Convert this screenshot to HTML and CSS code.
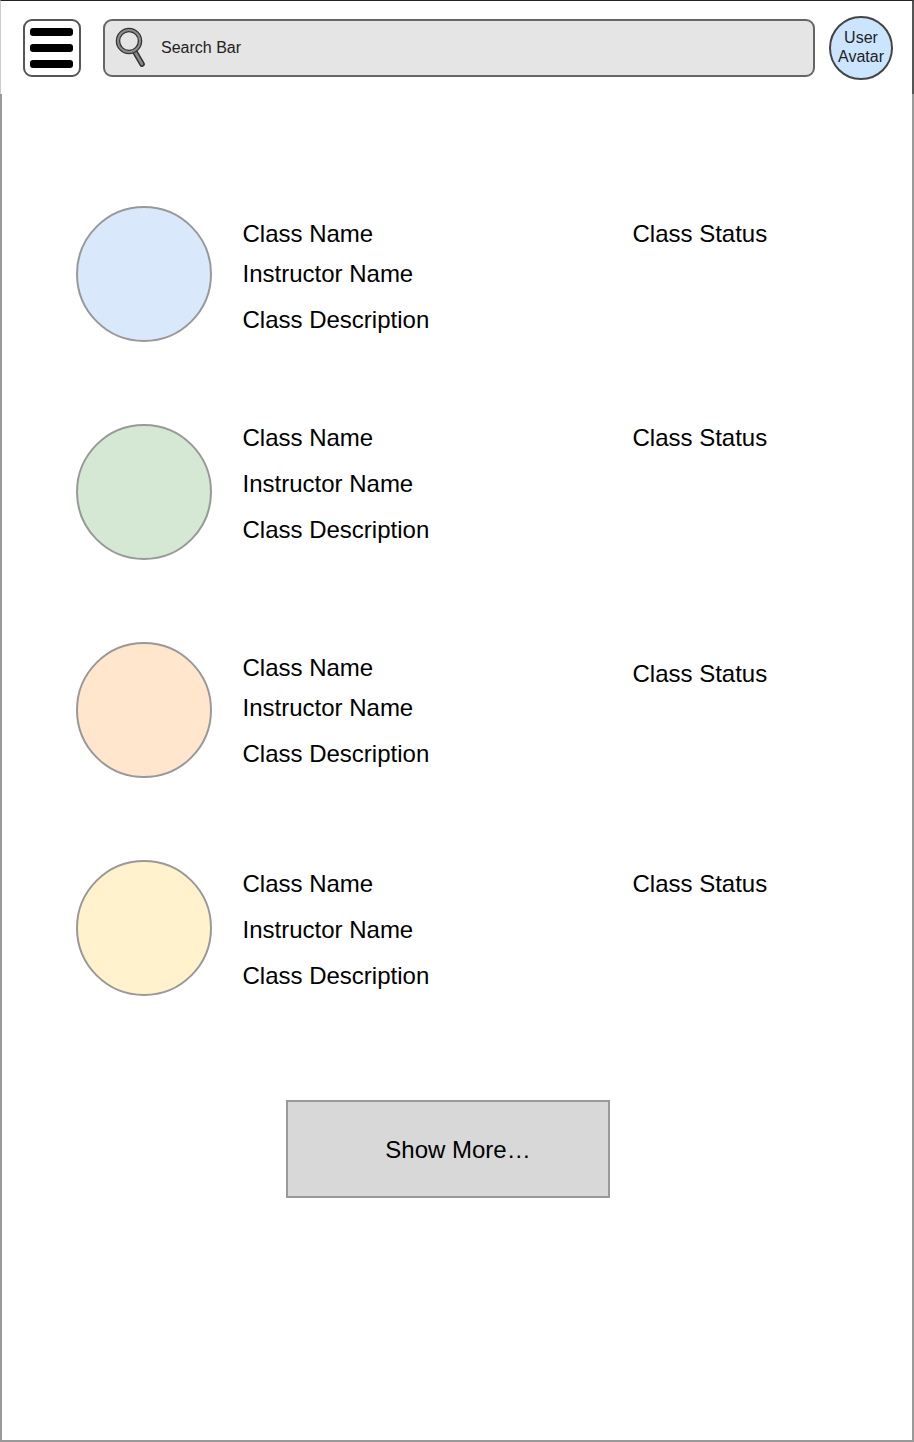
FILE: index.html
```html
<!DOCTYPE html>
<html lang="en">
<head>
  <meta charset="UTF-8">
  <meta name="viewport" content="width=device-width, initial-scale=1.0">
  <title>Classes</title>
  <link rel="stylesheet" href="styles.css">
</head>
<body>

  <!-- Top bar -->
  <header class="top-bar">
    <button class="menu-button" aria-label="Menu">
      <span class="menu-line"></span>
      <span class="menu-line"></span>
      <span class="menu-line"></span>
    </button>
    <div class="search-bar">
      <svg class="search-icon" width="30" height="40" viewBox="0 0 30 40" aria-hidden="true">
        <path d="M20 25 L27 37" stroke="#333" stroke-width="5.5" stroke-linecap="round"/>
        <path d="M20 25 L27 37" stroke="#888" stroke-width="2.5" stroke-linecap="round"/>
        <circle cx="14" cy="14" r="11" fill="none" stroke="#333" stroke-width="4.5"/>
        <circle cx="14" cy="14" r="11" fill="none" stroke="#8c8c8c" stroke-width="2"/>
      </svg>
      <span class="search-label">Search Bar</span>
    </div>
    <div class="avatar">User<br>Avatar</div>
  </header>

  <main class="content">
    <!-- Class list -->
    <section class="class-row row-one">
      <div class="class-circle circle-blue"></div>
      <div class="class-info">
        <div>Class Name</div>
        <div class="line-short">Instructor Name</div>
        <div class="line-wide">Class Description</div>
      </div>
      <div class="class-status">Class Status</div>
    </section>

    <section class="class-row row-two">
      <div class="class-circle circle-green"></div>
      <div class="class-info">
        <div>Class Name</div>
        <div class="line-wide">Instructor Name</div>
        <div class="line-wide">Class Description</div>
      </div>
      <div class="class-status">Class Status</div>
    </section>

    <section class="class-row row-three">
      <div class="class-circle circle-orange"></div>
      <div class="class-info">
        <div>Class Name</div>
        <div class="line-short">Instructor Name</div>
        <div class="line-wide">Class Description</div>
      </div>
      <div class="class-status">Class Status</div>
    </section>

    <section class="class-row row-four">
      <div class="class-circle circle-yellow"></div>
      <div class="class-info">
        <div>Class Name</div>
        <div class="line-wide">Instructor Name</div>
        <div class="line-wide">Class Description</div>
      </div>
      <div class="class-status">Class Status</div>
    </section>

    <button class="show-more">Show More…</button>
  </main>

</body>
</html>
```

FILE: styles.css
```css
/* Page */
* {
  box-sizing: border-box;
}

body {
  margin: 0;
  width: 914px;
  height: 1442px;
  overflow: hidden;
  background-color: #fff;
  color: #000;
  font-family: "Liberation Sans", Arial, sans-serif;
  font-size: 24px;
}

/* Top bar */
.top-bar {
  display: flex;
  align-items: flex-start;
  height: 94px;
  padding: 18px 0 0 22px;
  border-top: 1px solid #222;
  border-left: 1px solid #ccc;
  border-right: 2px solid #555;
}

.menu-button {
  display: flex;
  flex-direction: column;
  justify-content: space-between;
  width: 58px;
  height: 58px;
  padding: 7px 5px 7px 5px;
  background-color: #fff;
  border: 2px solid #555;
  border-radius: 9px;
}

.menu-line {
  display: block;
  width: 43px;
  height: 8px;
  background-color: #000;
  border-radius: 3px;
}

.search-bar {
  display: flex;
  align-items: flex-start;
  width: 712px;
  height: 58px;
  margin-left: 22px;
  padding: 6px 0 0 10px;
  background-color: #e5e5e5;
  border: 2px solid #666;
  border-radius: 9px;
}

.search-icon {
  flex: none;
}

.search-label {
  margin: 9px 0 0 16px;
  font-size: 16px;
  line-height: 24px;
  color: #222;
}

.avatar {
  width: 64px;
  height: 64px;
  margin: -3px 0 0 14px;
  padding-top: 10px;
  background-color: #cce5ff;
  border: 2px solid #444;
  border-radius: 50%;
  font-size: 16px;
  line-height: 19px;
  text-align: center;
  color: #222;
}

/* Content */
.content {
  height: 1348px;
  padding: 113px 0 0 74px;
  border-left: 2px solid #999;
  border-right: 2px solid #999;
  border-bottom: 2px solid #999;
}

.class-row {
  display: flex;
  align-items: flex-start;
  height: 218px;
  line-height: 26px;
}

.class-circle {
  flex: none;
  width: 136px;
  height: 136px;
  margin-top: -1px;
  border: 2px solid #999;
  border-radius: 50%;
}

.circle-blue {
  background-color: #dae8fc;
}

.circle-green {
  background-color: #d5e8d4;
}

.circle-orange {
  background-color: #ffe6cc;
}

.circle-yellow {
  background-color: #fff2cc;
}

.class-info {
  width: 390px;
  margin-left: 30.5px;
}

.line-short {
  margin-top: 14px;
}

.line-wide {
  margin-top: 20px;
}

.row-one .class-info,
.row-one .class-status {
  padding-top: 14px;
}

.row-three .class-info {
  padding-top: 12px;
}

.row-three .class-status {
  padding-top: 18px;
}

.row-four .class-info,
.row-four .class-status {
  padding-top: 10px;
}

/* Button */
.show-more {
  display: block;
  width: 324px;
  height: 98px;
  margin: 21px 0 0 210px;
  padding: 1px 0 0 20px;
  background-color: #d8d8d8;
  border: 2px solid #999;
  border-radius: 0;
  font-family: inherit;
  font-size: 24px;
  color: #000;
}
```
